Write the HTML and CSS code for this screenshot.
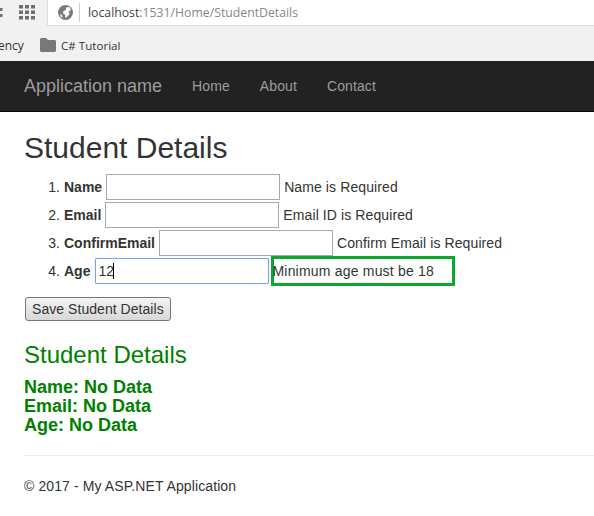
FILE: index.html
```html
<!DOCTYPE html>
<html lang="en">
<head>
  <meta charset="UTF-8">
  <title>Student Details</title>
  <link rel="stylesheet" href="styles.css">
</head>
<body>
  <div class="browser-top">
    <div class="toolbar">
      <div class="toolbar-left">
        <svg class="reload" width="3" height="10" viewBox="0 0 3 10" fill="#6e6e6e">
          <rect x="0" y="0" width="2.500" height="3"/><rect x="0" y="6" width="2.500" height="3"/>
        </svg>
        <svg class="apps" width="16" height="15" viewBox="0 0 16 15" fill="#6e6e6e">
          <rect x="0" y="0" width="4" height="3.500"/><rect x="6" y="0" width="4" height="3.500"/><rect x="12" y="0" width="4" height="3.500"/>
          <rect x="0" y="5.500" width="4" height="3.500"/><rect x="6" y="5.500" width="4" height="3.500"/><rect x="12" y="5.500" width="4" height="3.500"/>
          <rect x="0" y="11" width="4" height="3.500"/><rect x="6" y="11" width="4" height="3.500"/><rect x="12" y="11" width="4" height="3.500"/>
        </svg>
      </div>
      <div class="address">
        <svg width="15" height="15" viewBox="0 0 15 15">
          <circle cx="7.500" cy="7.500" r="7.500" fill="#7a7a7a"/>
          <path d="M8 2.500l3.500-.5 1.500 3-2.500 1.500 1 2.500-2.500 3-1.500 1-.5-3.500-2-1 .5-2.500 2.500-1z" fill="#fff"/>
          <path d="M2 9l2 1 .5 3-1.500-1z" fill="#fff"/>
        </svg>
        <span class="address-sep"></span>
        <span class="url">localhost<span class="url-rest">:1531/Home/StudentDetails</span></span>
      </div>
    </div>
    <div class="bookmarks">
      <span class="bookmark-cut">ency</span>
      <svg width="16" height="14" viewBox="0 0 16 14" fill="#787878">
        <path d="M0 1.500C0 .7.7 0 1.500 0H6l2 2h6.500c.8 0 1.500.7 1.500 1.500V12.500c0 .8-.7 1.500-1.500 1.500h-13C.7 14 0 13.300 0 12.500z"/>
      </svg>
      <span class="bookmark">C# Tutorial</span>
    </div>
  </div>

  <div class="navbar">
    <a class="brand" href="#">Application name</a>
    <a href="#">Home</a>
    <a href="#">About</a>
    <a href="#">Contact</a>
  </div>

  <div class="container">
    <h2 class="title">Student Details</h2>
    <ol class="fields">
      <li><label>Name</label> <input type="text"> <span>Name is Required</span></li>
      <li><label>Email</label> <input type="text"> <span>Email ID is Required</span></li>
      <li><label>ConfirmEmail</label> <input type="text"> <span>Confirm Email is Required</span></li>
      <li><label>Age</label> <span class="age-input"><input class="focused" type="text" value="12"><span class="caret"></span></span><span class="age-error">Minimum age must be 18</span></li>
    </ol>
    <button class="save-btn">Save Student Details</button>
    <h3 class="result-title">Student Details</h3>
    <div class="result">
      <div>Name: No Data</div>
      <div>Email: No Data</div>
      <div>Age: No Data</div>
    </div>
    <hr>
    <p class="footer">© 2017 - My ASP.NET Application</p>
  </div>
</body>
</html>
```

FILE: styles.css
```css
html, body {
  margin: 0;
  padding: 0;
  overflow: hidden;
}

body {
  font-family: "Liberation Sans", Arial, sans-serif;
  font-size: 14px;
  line-height: 20px;
  letter-spacing: 0.1px;
  color: #333;
  background-color: #fff;
}

.browser-top {
  background-color: #f1f1f1;
  height: 61px;
  letter-spacing: 0;
}

.toolbar {
  display: flex;
  height: 26px;
}

.toolbar-left {
  display: flex;
  width: 47px;
  box-sizing: border-box;
  padding-top: 5px;
}

.reload {
  margin-top: 3px;
}

.apps {
  margin-left: 16px;
}

.address {
  flex: 1;
  display: flex;
  align-items: center;
  gap: 6px;
  padding-left: 10px;
  background-color: #fff;
  border-left: 1px solid #ddd;
  border-bottom: 1px solid #ddd;
}

.address-sep {
  width: 1px;
  height: 19px;
  background-color: #ccc;
}

.url {
  margin-left: 2px;
  padding-top: 1px;
  font-family: "Open Sans", sans-serif;
  font-size: 12.250px;
  color: #444;
}

.url-rest {
  color: #888;
}

.bookmarks {
  display: flex;
  align-items: center;
  height: 35px;
  padding-top: 3px;
  box-sizing: border-box;
  font-family: "Open Sans", sans-serif;
  font-size: 12px;
  color: #333;
}

.bookmark-cut {
  width: 40px;
  margin-left: -2px;
  margin-right: 2px;
  padding-top: 1px;
}

.bookmark {
  margin-left: 5px;
  padding-top: 1px;
  font-size: 11.600px;
}

.navbar {
  display: flex;
  align-items: center;
  height: 50px;
  padding-left: 24px;
  background-color: #222;
  border-bottom: 1px solid #080808;
}

.navbar a {
  color: #9d9d9d;
  text-decoration: none;
  margin-right: 30px;
}

.navbar .brand {
  font-size: 18px;
  letter-spacing: 0;
}

.container {
  padding: 0 24px;
}

.title {
  margin: 19px 0 10px;
  font-size: 30px;
  font-weight: 500;
  line-height: 33px;
  letter-spacing: 0;
}

.fields {
  margin: 0 0 11px;
  padding-left: 40px;
}

.fields li {
  height: 28px;
}

.fields label {
  font-weight: bold;
  letter-spacing: 0;
}

.fields input {
  width: 174px;
  height: 26px;
  box-sizing: border-box;
  padding: 1px 2px;
  border: 1px solid #a9a9a9;
  font-family: inherit;
  font-size: 14px;
  color: #333;
  vertical-align: baseline;
}

.age-input {
  position: relative;
  display: inline-block;
  margin-left: 1px;
}

.fields .focused {
  border: 1px solid #7ba4e8;
  border-radius: 2px;
  box-shadow: 0 0 1px #7ba4e8;
}

.caret {
  position: absolute;
  left: 18px;
  top: 5px;
  width: 1px;
  height: 16px;
  background-color: #000;
}

.age-error {
  display: inline-block;
  box-sizing: border-box;
  width: 184px;
  height: 30px;
  margin: -2px 0 -2px 1.500px;
  border: 3px solid #0aa82c;
  letter-spacing: 0.2px;
  line-height: 24px;
  text-indent: -1.500px;
}

.save-btn {
  display: block;
  height: 24px;
  margin: 1px 0 0 1px;
  padding: 0 6px;
  border: 1px solid #777;
  border-radius: 3px;
  background: linear-gradient(#f4f4f4, #d8d8d8);
  font-family: inherit;
  font-size: 14px;
  letter-spacing: 0.05px;
  color: #333;
}

.result-title {
  margin: 21px 0 10px;
  font-size: 24px;
  font-weight: 500;
  line-height: 26px;
  letter-spacing: 0;
  color: green;
}

.result {
  font-size: 18px;
  font-weight: bold;
  line-height: 19px;
  letter-spacing: 0;
  color: green;
}

hr {
  margin: 20px -24px 20px 0;
  border: 0;
  border-top: 1px solid #eee;
}

.footer {
  margin: 0;
}
```
